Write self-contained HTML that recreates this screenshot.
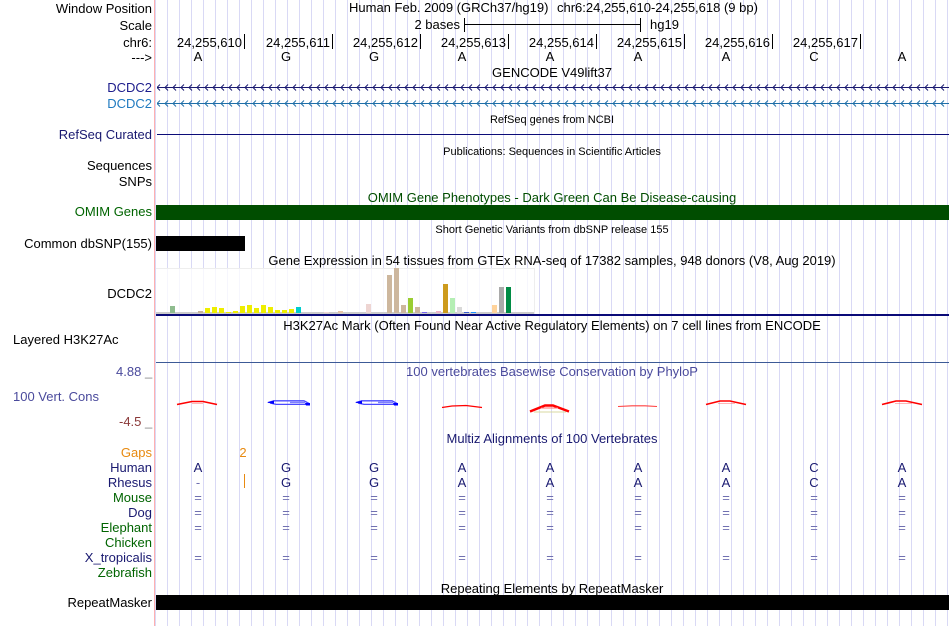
<!DOCTYPE html>
<html><head><meta charset="utf-8"><title>Genome Browser</title>
<style>
html,body{margin:0;padding:0;background:#fff;width:950px;height:626px;overflow:hidden}
svg{display:block}
text{font-family:"Liberation Sans",sans-serif;font-size:13px;fill:#000}
.e{text-anchor:end}.m{text-anchor:middle}
.s{font-size:11px}
.n{fill:#191970}.g{fill:#006400}
.d{fill:#7070b0}
</style></head><body>
<svg width="950" height="626" viewBox="0 0 950 626" shape-rendering="crispEdges">
<defs>
<pattern id="grid" x="167" y="0" width="12" height="626" patternUnits="userSpaceOnUse"><rect width="1" height="626" fill="#d9d9f5"/></pattern>
<pattern id="chev" x="156" y="83" width="8" height="9" patternUnits="userSpaceOnUse"><path d="M4 1.5 L1 4.5 L4 7.5" fill="none" stroke="#191970" stroke-width="1" shape-rendering="auto"/></pattern>
<pattern id="chev2" x="156" y="99" width="8" height="9" patternUnits="userSpaceOnUse"><path d="M4 1.5 L1 4.5 L4 7.5" fill="none" stroke="#1f6fa8" stroke-width="1" shape-rendering="auto"/></pattern>
</defs>
<rect x="155" width="795" height="626" fill="url(#grid)"/>
<rect x="154" width="1" height="626" fill="#ffb0b0"/>

<!-- ruler -->
<text class="e" x="152" y="13">Window Position</text>
<text class="e" x="152" y="30">Scale</text>
<text class="e" x="152" y="47">chr6:</text>
<text class="e" x="152" y="62">---&gt;</text>
<text x="349" y="12">Human Feb. 2009 (GRCh37/hg19)</text>
<text x="557" y="12">chr6:24,255,610-24,255,618 (9 bp)</text>
<text class="e" x="460" y="29">2 bases</text>
<path d="M464 18h1v14h-1zM640 18h1v14h-1zM464 24h177v1H464z" fill="#000"/>
<text x="650" y="29">hg19</text>
<g>
<text class="e" x="242" y="47">24,255,610</text><text class="e" x="330" y="47">24,255,611</text><text class="e" x="418" y="47">24,255,612</text><text class="e" x="506" y="47">24,255,613</text><text class="e" x="594" y="47">24,255,614</text><text class="e" x="682" y="47">24,255,615</text><text class="e" x="770" y="47">24,255,616</text><text class="e" x="858" y="47">24,255,617</text>
</g>
<path d="M244 34h1v15h-1zM332 34h1v15h-1zM420 34h1v15h-1zM508 34h1v15h-1zM596 34h1v15h-1zM684 34h1v15h-1zM772 34h1v15h-1zM860 34h1v15h-1z" fill="#000"/>
<g class="bases">
<text class="m" x="198" y="61">A</text><text class="m" x="286" y="61">G</text><text class="m" x="374" y="61">G</text><text class="m" x="462" y="61">A</text><text class="m" x="550" y="61">A</text><text class="m" x="638" y="61">A</text><text class="m" x="726" y="61">A</text><text class="m" x="814" y="61">C</text><text class="m" x="902" y="61">A</text>
</g>

<!-- genes -->
<text class="m" x="552" y="77">GENCODE V49lift37</text>
<text class="e" x="152" y="92" style="fill:#1c1c8c">DCDC2</text>
<text class="e" x="152" y="108" style="fill:#1f7ac0">DCDC2</text>
<rect x="157" y="83" width="792" height="9" fill="url(#chev)"/>
<rect x="157" y="87" width="792" height="1" fill="#191970"/>
<rect x="157" y="99" width="792" height="9" fill="url(#chev2)"/>
<rect x="157" y="103" width="792" height="1" fill="#1f6fa8"/>

<text class="m s" x="552" y="123">RefSeq genes from NCBI</text>
<text class="e n" x="152" y="139">RefSeq Curated</text>
<rect x="157" y="134" width="792" height="1" fill="#0c0c78"/>

<text class="m s" x="552" y="155">Publications: Sequences in Scientific Articles</text>
<text class="e" x="152" y="170">Sequences</text>
<text class="e" x="152" y="186">SNPs</text>

<text class="m" x="552" y="202" style="fill:#004d00">OMIM Gene Phenotypes - Dark Green Can Be Disease-causing</text>
<text class="e" x="152" y="216" style="fill:#006400">OMIM Genes</text>
<rect x="156" y="205" width="793" height="15" fill="#004d00"/>

<text class="m s" x="552" y="233">Short Genetic Variants from dbSNP release 155</text>
<text class="e" x="152" y="248">Common dbSNP(155)</text>
<rect x="156" y="236" width="89" height="15" fill="#000"/>

<!-- GTEx -->
<text class="m" x="552" y="265">Gene Expression in 54 tissues from GTEx RNA-seq of 17382 samples, 948 donors (V8, Aug 2019)</text>
<text class="e" x="152" y="298">DCDC2</text>
<rect x="156" y="268" width="378" height="46" fill="#fff" fill-opacity=".75"/>
<rect x="156" y="268" width="378" height="1" fill="#eeeeee"/>
<rect x="534" y="268" width="1" height="46" fill="#eeeeee"/>
<rect x="156" y="312" width="378" height="2" fill="#cccccc"/>
<g>
<rect x="170" y="306" width="5" height="7" fill="#8fbc8f"/>
<rect x="198" y="311" width="5" height="2" fill="#c8b49b"/>
<rect x="205" y="308" width="5" height="5" fill="#eeee00"/>
<rect x="212" y="307" width="5" height="6" fill="#eeee00"/>
<rect x="219" y="308" width="5" height="5" fill="#eeee00"/>
<rect x="226" y="312" width="5" height="1" fill="#eeee00"/>
<rect x="233" y="311" width="5" height="2" fill="#eeee00"/>
<rect x="240" y="306" width="5" height="7" fill="#eeee00"/>
<rect x="247" y="305" width="5" height="8" fill="#eeee00"/>
<rect x="254" y="308" width="5" height="5" fill="#eeee00"/>
<rect x="261" y="305" width="5" height="8" fill="#eeee00"/>
<rect x="268" y="307" width="5" height="6" fill="#eeee00"/>
<rect x="275" y="310" width="5" height="3" fill="#eeee00"/>
<rect x="282" y="310" width="5" height="3" fill="#eeee00"/>
<rect x="289" y="309" width="5" height="4" fill="#eeee00"/>
<rect x="296" y="307" width="5" height="6" fill="#00cdcd"/>
<rect x="324" y="312" width="5" height="1" fill="#eed5d2"/>
<rect x="338" y="311" width="5" height="2" fill="#e5c4a8"/>
<rect x="366" y="304" width="5" height="9" fill="#eed5d2"/>
<rect x="387" y="275" width="5" height="38" fill="#cdb79e"/>
<rect x="394" y="268" width="5" height="45" fill="#cdb79e"/>
<rect x="401" y="305" width="5" height="8" fill="#cdb79e"/>
<rect x="408" y="298" width="5" height="15" fill="#9acd32"/>
<rect x="415" y="307" width="5" height="6" fill="#cdb79e"/>
<rect x="422" y="312" width="5" height="1" fill="#7a67ee"/>
<rect x="436" y="311" width="5" height="2" fill="#eeb4c8"/>
<rect x="443" y="284" width="5" height="29" fill="#cd9b1d"/>
<rect x="450" y="298" width="5" height="15" fill="#b4eeb4"/>
<rect x="457" y="307" width="5" height="6" fill="#d9d9d9"/>
<rect x="464" y="312" width="5" height="1" fill="#3a5fcd"/>
<rect x="471" y="312" width="5" height="1" fill="#1e90ff"/>
<rect x="492" y="305" width="5" height="8" fill="#ffd39b"/>
<rect x="499" y="287" width="5" height="26" fill="#aaaaaa"/>
<rect x="506" y="287" width="5" height="26" fill="#008b45"/>
</g>
<rect x="156" y="314" width="793" height="2" fill="#0a0a78"/>

<!-- H3K27Ac -->
<text class="m" x="552" y="330">H3K27Ac Mark (Often Found Near Active Regulatory Elements) on 7 cell lines from ENCODE</text>
<text x="13" y="344">Layered H3K27Ac</text>
<rect x="156" y="362" width="793" height="1" fill="#3c5a96"/>

<!-- PhyloP -->
<text class="m" x="552" y="376" style="fill:#4a4a9c">100 vertebrates Basewise Conservation by PhyloP</text>
<text x="116" y="376" style="fill:#4a4a9c">4.88</text>
<text x="145" y="376" style="fill:#888">_</text>
<text x="13" y="401" style="fill:#4a4a9c">100 Vert. Cons</text>
<text x="119" y="426" style="fill:#8b3a3a">-4.5</text>
<text x="145" y="426" style="fill:#888">_</text>
<g shape-rendering="auto" fill="none">
<g stroke="#ff0000" stroke-width="1.6">
<path d="M177 404.5 L192 401.5 L203 401.5 L217 404.5"/>
<path d="M442 407.5 L452 406 L466 405.5 L482 407.5" stroke-width="1.2"/>
<path d="M530 411.5 L545 405.5 L553 405.5 L569 411.5" stroke-width="2.4"/>
<path d="M618 406.5 L632 405.8 L645 405.8 L657 406.5" stroke-width="1.1" stroke="#ff4040"/>
<path d="M706 404.5 L720 401 L730 401 L746 404.5"/>
<path d="M882 404.5 L896 401 L906 401 L922 404.5"/>
</g>
<g stroke="#ff7070" stroke-width="1">
<path d="M541 408 H558"/><path d="M192 403.5 H203" stroke-opacity=".5"/><path d="M718 403.5 H735" stroke-opacity=".5"/><path d="M895 403.5 H912" stroke-opacity=".5"/>
</g>
<path d="M534 412 H566" stroke="#d8d8a0" stroke-width="1"/>
<g stroke="#4a4aff" stroke-width="1.3">
<path d="M268 402.5 L274 400.8 H304 L309 403.5"/><path d="M270 403 L276 404.4 H306"/><path d="M290 402.5 H305" stroke="#8080ff"/>
<path d="M356 402.5 L362 400.8 H392 L397 403.5"/><path d="M358 403 L364 404.4 H394"/><path d="M378 402.5 H393" stroke="#8080ff"/>
</g>
<g fill="#0000ff">
<path d="M267 402.5 L274 400.5 V404Z"/><path d="M305 403 H310 V405.5 H306Z"/>
<path d="M355 402.5 L362 400.5 V404Z"/><path d="M393 403 H398 V405.5 H394Z"/>
</g>
</g>

<!-- Multiz -->
<text class="m" x="552" y="443" style="fill:#191970">Multiz Alignments of 100 Vertebrates</text>
<text class="e" x="152" y="457" style="fill:#e88a10">Gaps</text>
<text class="m" x="243" y="457" style="fill:#e88a10">2</text>
<text class="e n" x="152" y="472">Human</text>
<text class="e n" x="152" y="487">Rhesus</text>
<text class="e g" x="152" y="502">Mouse</text>
<text class="e n" x="152" y="517">Dog</text>
<text class="e g" x="152" y="532">Elephant</text>
<text class="e g" x="152" y="547">Chicken</text>
<text class="e n" x="152" y="562">X_tropicalis</text>
<text class="e g" x="152" y="577">Zebrafish</text>

<text class="m n" x="198" y="472">A</text><text class="m n" x="286" y="472">G</text><text class="m n" x="374" y="472">G</text><text class="m n" x="462" y="472">A</text><text class="m n" x="550" y="472">A</text><text class="m n" x="638" y="472">A</text><text class="m n" x="726" y="472">A</text><text class="m n" x="814" y="472">C</text><text class="m n" x="902" y="472">A</text>
<text class="m d" x="198" y="487">-</text><rect x="244" y="474" width="1" height="14" fill="#e88a10"/>
<text class="m n" x="286" y="487">G</text><text class="m n" x="374" y="487">G</text><text class="m n" x="462" y="487">A</text><text class="m n" x="550" y="487">A</text><text class="m n" x="638" y="487">A</text><text class="m n" x="726" y="487">A</text><text class="m n" x="814" y="487">C</text><text class="m n" x="902" y="487">A</text>
<g class="eq">
<text class="m d" x="198" y="502">=</text><text class="m d" x="286" y="502">=</text><text class="m d" x="374" y="502">=</text><text class="m d" x="462" y="502">=</text><text class="m d" x="550" y="502">=</text><text class="m d" x="638" y="502">=</text><text class="m d" x="726" y="502">=</text><text class="m d" x="814" y="502">=</text><text class="m d" x="902" y="502">=</text>
<text class="m d" x="198" y="517">=</text><text class="m d" x="286" y="517">=</text><text class="m d" x="374" y="517">=</text><text class="m d" x="462" y="517">=</text><text class="m d" x="550" y="517">=</text><text class="m d" x="638" y="517">=</text><text class="m d" x="726" y="517">=</text><text class="m d" x="814" y="517">=</text><text class="m d" x="902" y="517">=</text>
<text class="m d" x="198" y="532">=</text><text class="m d" x="286" y="532">=</text><text class="m d" x="374" y="532">=</text><text class="m d" x="462" y="532">=</text><text class="m d" x="550" y="532">=</text><text class="m d" x="638" y="532">=</text><text class="m d" x="726" y="532">=</text><text class="m d" x="814" y="532">=</text><text class="m d" x="902" y="532">=</text>
<text class="m d" x="198" y="562">=</text><text class="m d" x="286" y="562">=</text><text class="m d" x="374" y="562">=</text><text class="m d" x="462" y="562">=</text><text class="m d" x="550" y="562">=</text><text class="m d" x="638" y="562">=</text><text class="m d" x="726" y="562">=</text><text class="m d" x="814" y="562">=</text><text class="m d" x="902" y="562">=</text>
</g>

<!-- RepeatMasker -->
<text class="m" x="552" y="593">Repeating Elements by RepeatMasker</text>
<text class="e" x="152" y="607">RepeatMasker</text>
<rect x="156" y="595" width="793" height="15" fill="#000"/>
</svg>
</body></html>
